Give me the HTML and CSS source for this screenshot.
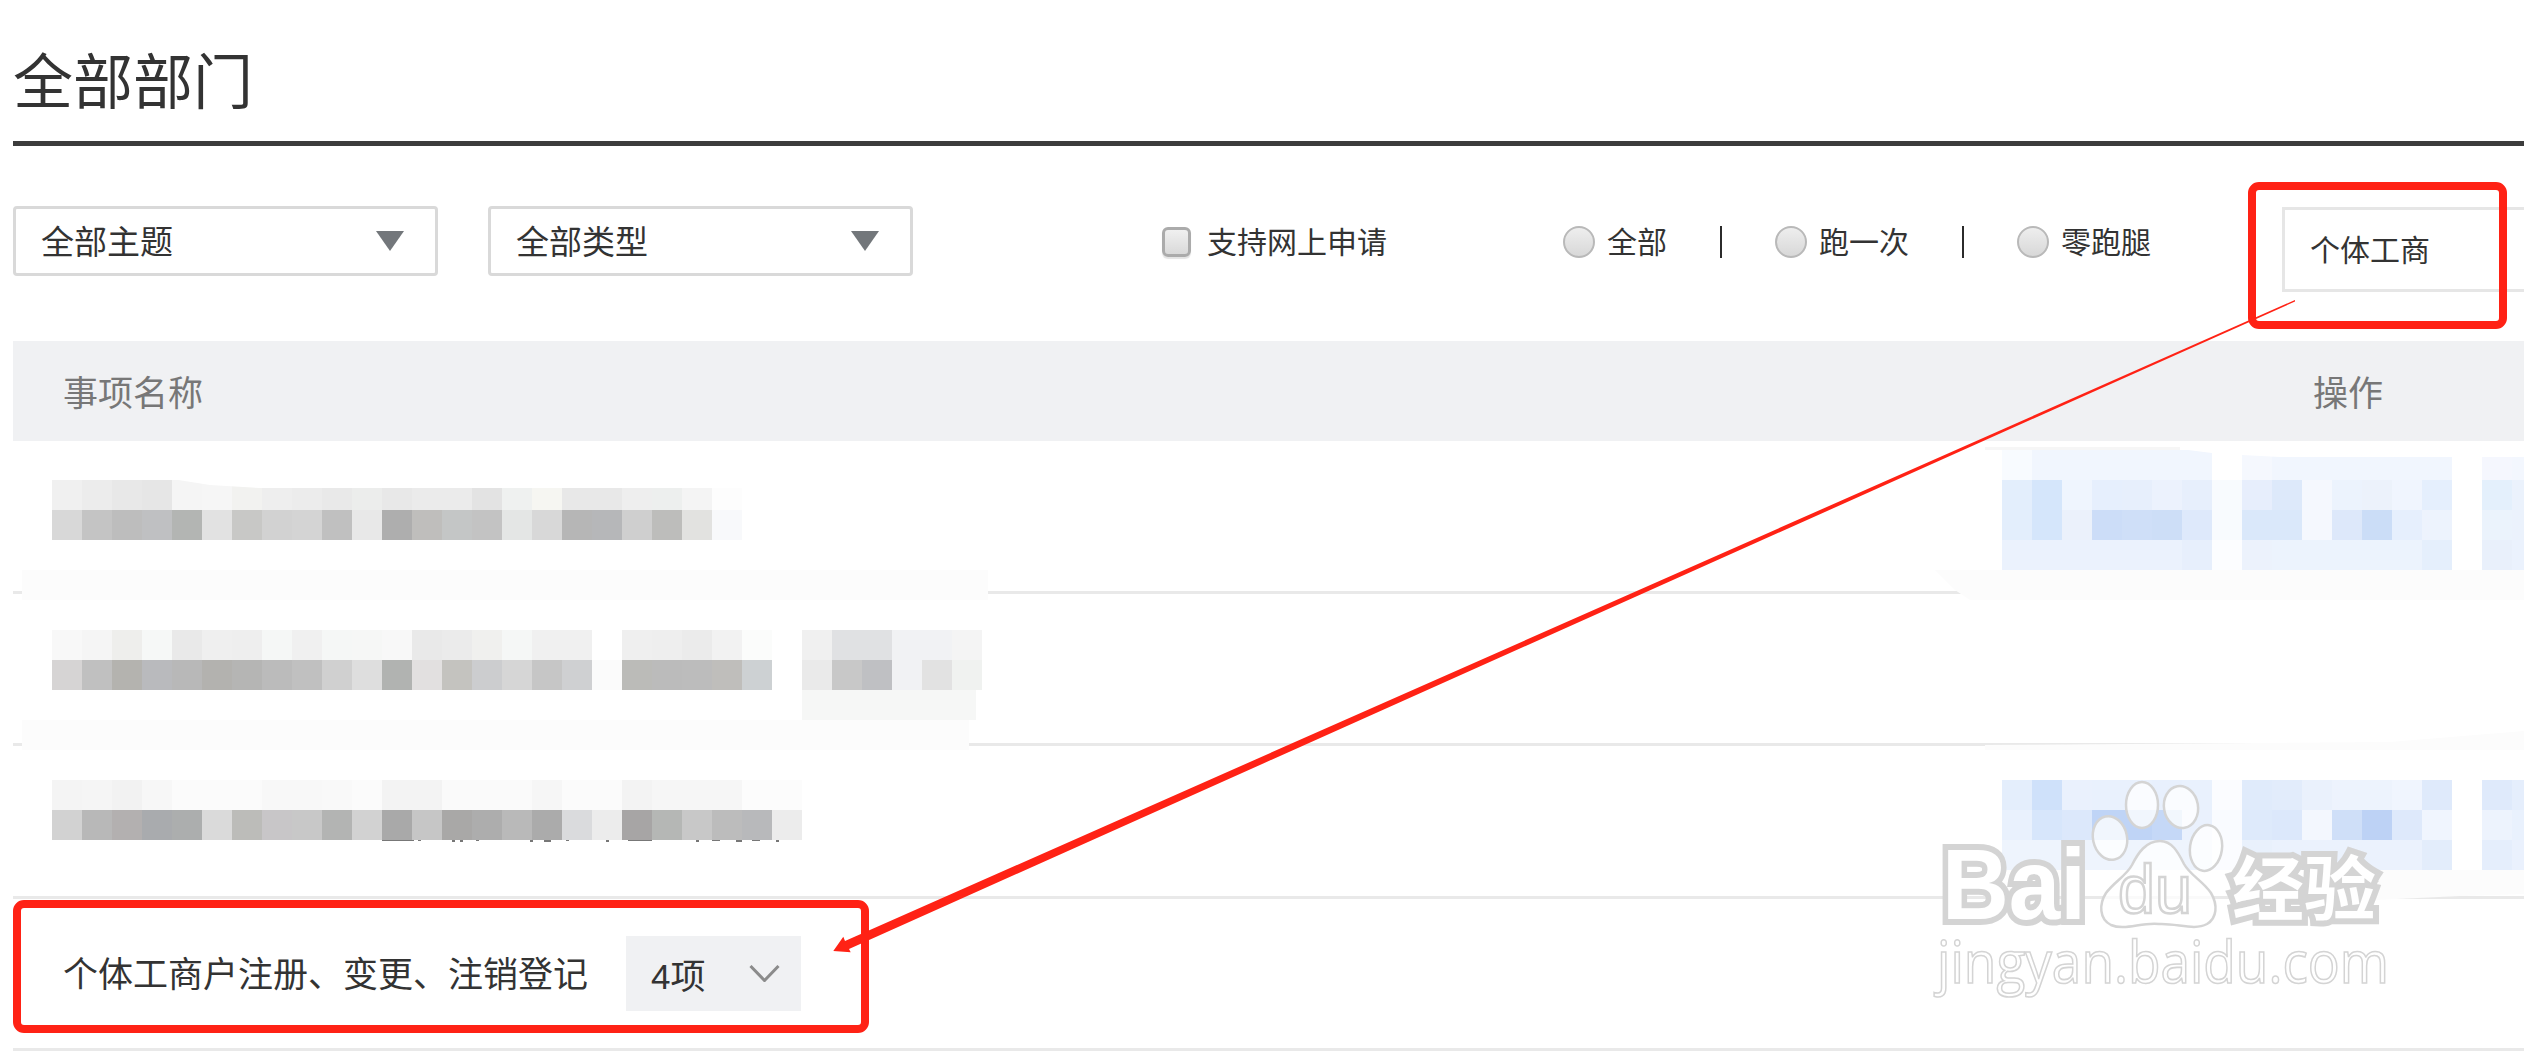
FILE: index.html
```html
<!DOCTYPE html>
<html lang="zh-CN">
<head>
<meta charset="utf-8">
<title>全部部门</title>
<link rel="stylesheet" href="styles.css">
</head>
<body>
<main class="page">
  <h1 class="title">全部部门</h1>
  <div class="filters">
    <div class="select"><span class="lift">全部主题</span><i class="caret"></i></div>
    <div class="select"><span class="lift">全部类型</span><i class="caret"></i></div>
    <label class="check"><i class="checkbox"></i><span class="lift">支持网上申请</span></label>
    <div class="radios">
      <label class="radio"><i class="dot"></i><span class="lift">全部</span></label>
      <i class="sep"></i>
      <label class="radio"><i class="dot"></i><span class="lift">跑一次</span></label>
      <i class="sep"></i>
      <label class="radio"><i class="dot"></i><span class="lift">零跑腿</span></label>
    </div>
    <div class="search">个体工商</div>
  </div>
  <div class="thead"><span>事项名称</span><span class="ops">操作</span></div>
  <div class="row"></div>
  <div class="row"></div>
  <div class="row"></div>
  <div class="row row-item">
    <span class="name lift">个体工商户注册、变更、注销登记</span>
    <span class="chip"><span>4项</span>
      <svg class="chev" viewBox="0 0 31 17"><polyline points="1.5,1 15.5,15.5 29.5,1"/></svg>
    </span>
  </div>
</main>

<svg class="overlay" viewBox="0 0 2524 1051" aria-hidden="true">
  <!-- redaction: soft bands -->
  <g class="band">
    <rect x="22" y="570" width="966" height="30"/>
    <rect x="22" y="720" width="947" height="30"/>
    <polygon points="1935,570 2524,570 2524,600 1970,600 1955,590"/>
    <polygon points="2524,731 2390,742 1985,745 1985,750 2524,750"/>
    <polygon points="2380,870 2524,870 2524,894 2460,896 2375,900"/>
  </g>
  <rect x="802" y="690" width="174" height="30" fill="#f6f7f6"/>
  <rect x="1985" y="447" width="195" height="3" fill="#f6f6f6"/>

  <!-- redaction: row 1 names -->
  <g class="m" transform="translate(52,480)">
    <rect x="0" fill="#f0f0f0"/><rect x="30" fill="#ececec"/><rect x="60" fill="#e8e8e8"/><rect x="90" fill="#e6e6e6"/><rect x="120" fill="#f5f5f5"/><rect x="150" fill="#f6f6f6"/><rect x="180" fill="#f2f2f0"/><rect x="210" fill="#eeeeee"/><rect x="240" fill="#ececec"/><rect x="270" fill="#e9e9e9"/><rect x="300" fill="#ecedec"/><rect x="330" fill="#e8e8e8"/><rect x="360" fill="#ebebeb"/><rect x="390" fill="#ebebeb"/><rect x="420" fill="#e3e3e3"/><rect x="450" fill="#eff1f0"/><rect x="480" fill="#f6f6f2"/><rect x="510" fill="#e8e8e8"/><rect x="540" fill="#e8e8e8"/><rect x="570" fill="#eeeeee"/><rect x="600" fill="#edefee"/><rect x="630" fill="#f4f4f4"/><rect x="660" fill="#fdfdfd"/>
  </g>
  <polygon points="172,479 210,485 260,488 743,488 743,479" fill="#fff"/>
  <g class="m" transform="translate(52,510)">
    <rect x="0" fill="#d8d8d8"/><rect x="30" fill="#c4c4c4"/><rect x="60" fill="#bdbdbd"/><rect x="90" fill="#bfc0c2"/><rect x="120" fill="#b3b5b3"/><rect x="150" fill="#e2e2e2"/><rect x="180" fill="#c8c8c6"/><rect x="210" fill="#d2d2d2"/><rect x="240" fill="#d4d4d4"/><rect x="270" fill="#c0c0c0"/><rect x="300" fill="#e8e8e8"/><rect x="330" fill="#aeaeae"/><rect x="360" fill="#bfbebc"/><rect x="390" fill="#c4c6c6"/><rect x="420" fill="#c3c3c3"/><rect x="450" fill="#e4e6e5"/><rect x="480" fill="#d8d8d8"/><rect x="510" fill="#b6b6b6"/><rect x="540" fill="#b6b7b9"/><rect x="570" fill="#cfcfcf"/><rect x="600" fill="#bdbdbb"/><rect x="630" fill="#e2e2e0"/><rect x="660" fill="#f8f9fb"/>
  </g>

  <!-- redaction: row 2 names -->
  <g class="m" transform="translate(52,630)">
    <rect x="0" fill="#f8f8f8"/><rect x="30" fill="#f5f5f5"/><rect x="60" fill="#eeeeec"/><rect x="90" fill="#f6f8f7"/><rect x="120" fill="#e9e9e9"/><rect x="150" fill="#efefef"/><rect x="180" fill="#eeeeee"/><rect x="210" fill="#f5f7f6"/><rect x="240" fill="#f0f0f0"/><rect x="270" fill="#f5f7f6"/><rect x="300" fill="#f6f7f6"/><rect x="330" fill="#f8f8f8"/><rect x="360" fill="#e9e9e9"/><rect x="390" fill="#ebebeb"/><rect x="420" fill="#f0f0ee"/><rect x="450" fill="#f5f7f6"/><rect x="480" fill="#f0f0f0"/><rect x="510" fill="#f0f0f0"/>
    <rect x="570" fill="#efefef"/><rect x="600" fill="#eeeeee"/><rect x="630" fill="#ebebeb"/><rect x="660" fill="#f2f2f2"/><rect x="690" fill="#fbfcfb"/>
    <rect x="750" fill="#f0f0f0"/><rect x="780" fill="#e0e1e3"/><rect x="810" fill="#e0e1e3"/><rect x="840" fill="#f1f2f4"/><rect x="870" fill="#f1f2f4"/><rect x="900" fill="#f4f4f4"/>
  </g>
  <g class="m" transform="translate(52,660)">
    <rect x="0" fill="#d6d4d4"/><rect x="30" fill="#c0c0c0"/><rect x="60" fill="#b4b3af"/><rect x="90" fill="#b9babd"/><rect x="120" fill="#b8b8b8"/><rect x="150" fill="#b3b2af"/><rect x="180" fill="#b5b5b4"/><rect x="210" fill="#bbbbbb"/><rect x="240" fill="#c0c0c0"/><rect x="270" fill="#d0d0d0"/><rect x="300" fill="#dedede"/><rect x="330" fill="#b1b3b1"/><rect x="360" fill="#e2e0e0"/><rect x="390" fill="#c4c3bf"/><rect x="420" fill="#cccdcf"/><rect x="450" fill="#d6d6d6"/><rect x="480" fill="#c6c6c6"/><rect x="510" fill="#cfd0d2"/><rect x="540" fill="#fbfbfb"/>
    <rect x="570" fill="#bbbbb8"/><rect x="600" fill="#bbbbbb"/><rect x="630" fill="#bcbcbc"/><rect x="660" fill="#bfbebb"/><rect x="690" fill="#cdd1d3"/>
    <rect x="750" fill="#eaeaea"/><rect x="780" fill="#c8c8c8"/><rect x="810" fill="#bfc0c3"/><rect x="840" fill="#f1f2f4"/><rect x="870" fill="#e2e2e2"/><rect x="900" fill="#f0f2f0"/>
  </g>

  <!-- redaction: row 3 names -->
  <g class="sliver">
    <rect x="382" y="839" width="32" height="2"/><rect x="418" y="839" width="3" height="2"/><rect x="452" y="839" width="3" height="3"/><rect x="460" y="839" width="3" height="3"/><rect x="476" y="839" width="3" height="2"/><rect x="530" y="839" width="3" height="3"/><rect x="544" y="839" width="7" height="3"/><rect x="566" y="839" width="3" height="2"/><rect x="606" y="839" width="3" height="3"/><rect x="628" y="839" width="24" height="2"/><rect x="696" y="839" width="3" height="3"/><rect x="712" y="839" width="8" height="2"/><rect x="736" y="839" width="6" height="3"/><rect x="752" y="839" width="8" height="2"/><rect x="776" y="839" width="3" height="3"/>
  </g>
  <g class="m" transform="translate(52,780)">
    <rect x="0" fill="#f4f4f4"/><rect x="30" fill="#f5f5f5"/><rect x="60" fill="#f2f2f2"/><rect x="90" fill="#f7f7f7"/><rect x="120" fill="#fbfbfb"/><rect x="150" fill="#fbfbfb"/><rect x="180" fill="#fbfbfb"/><rect x="210" fill="#f8f8f8"/><rect x="240" fill="#f8f8f8"/><rect x="270" fill="#f9f9f9"/><rect x="300" fill="#fbfbfb"/><rect x="330" fill="#f3f3f3"/><rect x="360" fill="#f3f3f3"/><rect x="390" fill="#fafafa"/><rect x="420" fill="#fafafa"/><rect x="450" fill="#fafafa"/><rect x="480" fill="#f6f6f6"/><rect x="510" fill="#fbfbfb"/><rect x="540" fill="#fbfbfb"/><rect x="570" fill="#f3f3f3"/><rect x="600" fill="#f6f6f6"/><rect x="630" fill="#f6f6f6"/><rect x="660" fill="#f6f6f6"/><rect x="690" fill="#fcfcfc"/><rect x="720" fill="#fcfcfc"/>
  </g>
  <g class="m" transform="translate(52,810)">
    <rect x="0" fill="#d2d2d2"/><rect x="30" fill="#b8b8b8"/><rect x="60" fill="#b3b0b0"/><rect x="90" fill="#a9abae"/><rect x="120" fill="#acaeae"/><rect x="150" fill="#dadada"/><rect x="180" fill="#bcbcb9"/><rect x="210" fill="#c8c6c8"/><rect x="240" fill="#c8c8c8"/><rect x="270" fill="#b3b4b3"/><rect x="300" fill="#d2d2d2"/><rect x="330" fill="#a9a9a9"/><rect x="360" fill="#c6c6c6"/><rect x="390" fill="#a9a8a7"/><rect x="420" fill="#adadad"/><rect x="450" fill="#b9b9b9"/><rect x="480" fill="#ababab"/><rect x="510" fill="#dadbdd"/><rect x="540" fill="#ececec"/><rect x="570" fill="#a7a5a5"/><rect x="600" fill="#b5b7b5"/><rect x="630" fill="#c8c8c8"/><rect x="660" fill="#bcbcbc"/><rect x="690" fill="#b8b9bb"/><rect x="720" fill="#ececec"/>
  </g>

  <!-- redaction: row 1 actions -->
  <g class="m" transform="translate(2002,450)">
    <rect x="0" fill="#f8fbff"/><rect x="30" fill="#f1f6fe"/><rect x="60" fill="#f1f6fe"/><rect x="90" fill="#f1f6fe"/><rect x="120" fill="#f1f6fe"/><rect x="150" fill="#f1f6fe"/><rect x="180" fill="#f1f6fe"/>
    <rect x="240" fill="#f5f8fe"/><rect x="270" fill="#f1f6fe"/><rect x="300" fill="#f1f6fe"/><rect x="330" fill="#f1f6fe"/><rect x="360" fill="#f1f6fe"/><rect x="390" fill="#f1f6fe"/><rect x="420" fill="#f1f6fe"/>
    <rect x="480" fill="#f5f7fe"/><rect x="510" fill="#f3f7fe"/>
  </g>
  <polygon points="2180,449 2212,453 2212,449" fill="#fff"/>
  <polygon points="2242,449 2242,455 2280,457 2524,457 2524,449" fill="#fff"/>
  <g class="m" transform="translate(2002,480)">
    <rect x="0" fill="#e3eefc"/><rect x="30" fill="#d5e6fb"/><rect x="60" fill="#eff5fe"/><rect x="90" fill="#e6effd"/><rect x="120" fill="#e7effc"/><rect x="150" fill="#ecf2fd"/><rect x="180" fill="#e7effc"/><rect x="210" fill="#f8fbfe"/>
    <rect x="240" fill="#e7eefc"/><rect x="270" fill="#dde9fa"/><rect x="300" fill="#f5f8fe"/><rect x="330" fill="#ecf3fd"/><rect x="360" fill="#ecf2fb"/><rect x="390" fill="#f0f5fe"/><rect x="420" fill="#e5effd"/>
    <rect x="480" fill="#e4f0fc"/><rect x="510" fill="#ebf2fc"/>
  </g>
  <g class="m" transform="translate(2002,510)">
    <rect x="0" fill="#e3eefc"/><rect x="30" fill="#d5e6fb"/><rect x="60" fill="#ebf1fb"/><rect x="90" fill="#ccddf8"/><rect x="120" fill="#cfdff8"/><rect x="150" fill="#cddef7"/><rect x="180" fill="#dee9fb"/><rect x="210" fill="#f8fbfe"/>
    <rect x="240" fill="#dae8fa"/><rect x="270" fill="#dae8fa"/><rect x="300" fill="#f5f8fe"/><rect x="330" fill="#dde8fa"/><rect x="360" fill="#cbddf7"/><rect x="390" fill="#e6effd"/><rect x="420" fill="#edf3fd"/>
    <rect x="480" fill="#ebf3fc"/><rect x="510" fill="#ebf2fc"/>
  </g>
  <g class="m" transform="translate(2002,540)">
    <rect x="0" fill="#ebf2fd"/><rect x="30" fill="#ebf2fd"/><rect x="60" fill="#ebf2fd"/><rect x="90" fill="#ebf2fd"/><rect x="120" fill="#ebf2fd"/><rect x="150" fill="#ebf2fd"/><rect x="180" fill="#e7effc"/><rect x="210" fill="#fcfdff"/>
    <rect x="240" fill="#ecf2fc"/><rect x="270" fill="#ecf3fd"/><rect x="300" fill="#ecf3fd"/><rect x="330" fill="#ecf3fd"/><rect x="360" fill="#ecf3fd"/><rect x="390" fill="#ecf3fd"/><rect x="420" fill="#e5effc"/>
    <rect x="480" fill="#e9f0fb"/><rect x="510" fill="#ebf2fd"/>
  </g>

  <!-- redaction: row 3 actions -->
  <g class="m" transform="translate(2002,780)">
    <rect x="0" fill="#e4eefc"/><rect x="30" fill="#cfe1fa"/><rect x="60" fill="#eaf1fd"/><rect x="90" fill="#e9f1fd"/><rect x="120" fill="#e9f1fd"/><rect x="150" fill="#e8f0fd"/><rect x="180" fill="#e9f1fd"/><rect x="210" fill="#fbfcff"/>
    <rect x="240" fill="#e0ebfb"/><rect x="270" fill="#e2ecfb"/><rect x="300" fill="#eaf1fc"/><rect x="330" fill="#edf3fd"/><rect x="360" fill="#edf3fd"/><rect x="390" fill="#f0f5fe"/><rect x="420" fill="#dfeafb"/>
    <rect x="480" fill="#dfeafb"/><rect x="510" fill="#e5eefc"/>
  </g>
  <g class="m" transform="translate(2002,810)">
    <rect x="0" fill="#e9f1fd"/><rect x="30" fill="#d7e6fb"/><rect x="60" fill="#dce8fb"/><rect x="90" fill="#bfd4f6"/><rect x="120" fill="#bfd4f6"/><rect x="150" fill="#c5d8f7"/><rect x="180" fill="#eaf1fd"/><rect x="210" fill="#f9fbff"/>
    <rect x="240" fill="#deeafb"/><rect x="270" fill="#dce8fb"/><rect x="300" fill="#f3f7fe"/><rect x="330" fill="#cfdff8"/><rect x="360" fill="#bdd2f5"/><rect x="390" fill="#dee9fb"/><rect x="420" fill="#f0f5fe"/>
    <rect x="480" fill="#edf3fd"/><rect x="510" fill="#e9f1fd"/>
  </g>
  <g class="m" transform="translate(2002,840)">
    <rect x="0" fill="#eef4fd"/><rect x="30" fill="#eef4fd"/><rect x="60" fill="#eef4fd"/><rect x="90" fill="#eef4fd"/><rect x="120" fill="#eef4fd"/><rect x="150" fill="#eef4fd"/><rect x="180" fill="#eef4fd"/><rect x="210" fill="#fbfcff"/>
    <rect x="240" fill="#e9f1fc"/><rect x="270" fill="#ebf2fd"/><rect x="300" fill="#ebf2fd"/><rect x="330" fill="#ebf2fd"/><rect x="360" fill="#ebf2fd"/><rect x="390" fill="#ebf2fd"/><rect x="420" fill="#e3edfb"/>
    <rect x="480" fill="#e5eefc"/><rect x="510" fill="#eaf1fd"/>
  </g>

  <!-- watermark -->
  <g class="wm">
    <ellipse cx="2142" cy="805" rx="16" ry="23"/>
    <ellipse cx="2181" cy="807" rx="17" ry="21" transform="rotate(-10 2181 807)"/>
    <ellipse cx="2110" cy="838" rx="17" ry="22" transform="rotate(-12 2110 838)"/>
    <ellipse cx="2206" cy="848" rx="16" ry="23" transform="rotate(8 2206 848)"/>
    <path d="M2160 841c-14 0-22 12-28 24-6 11-18 17-26 28-7 11-7 26 5 32 14 6 30-3 48-1 18-1 35 7 48 0 10-6 11-19 4-31-8-12-21-18-27-29-6-12-12-23-24-23z"/>
    <text class="wm-l" x="1942" y="919" textLength="144" lengthAdjust="spacingAndGlyphs">Bai</text>
    <text class="wm-d" x="2118" y="913" textLength="74" lengthAdjust="spacingAndGlyphs">du</text>
    <text class="wm-c" x="2232" y="915" textLength="144" lengthAdjust="spacingAndGlyphs">经验</text>
    <text class="wm-u" x="1937" y="983" textLength="452" lengthAdjust="spacingAndGlyphs">jingyan.baidu.com</text>
  </g>

  <!-- annotations -->
  <rect class="mark" x="2252" y="186" width="251" height="139" rx="7"/>
  <rect class="mark" x="17" y="904" width="848" height="125" rx="7"/>
  <polygon class="arrow" points="2295,300 845,941 843.3,936.7 833.3,951 850.7,952.3 849,949 2295,301.5"/>
</svg>
</body>
</html>
```

FILE: styles.css
```css
* { box-sizing: border-box; }
html, body { margin: 0; padding: 0; background: #fff; }
body {
  width: 2524px;
  height: 1051px;
  overflow: hidden;
  position: relative;
  color: #333;
  font-family: "Noto Sans CJK SC", "Liberation Sans", sans-serif;
  font-weight: 400;
}
i { display: block; font-style: normal; }

.page { padding-left: 13px; }
.lift { padding-bottom: 3px; }

.title {
  margin: 0;
  height: 146px;
  padding-top: 36px;
  border-bottom: 5px solid #3c3c3c;
  font-size: 60px;
  line-height: 84px;
  font-weight: 400;
}

.filters {
  display: flex;
  align-items: flex-start;
  height: 135px;
  margin-top: 60px;
  font-size: 30px;
  line-height: 32px;
  white-space: nowrap;
}
.select {
  flex: none;
  width: 425px;
  height: 70px;
  margin-right: 50px;
  padding: 0 31px 0 25px;
  display: flex;
  align-items: center;
  justify-content: space-between;
  border: 3px solid #d9d9d9;
  border-radius: 4px;
  font-size: 33px;
}
.caret {
  width: 0;
  height: 0;
  border-left: 14px solid transparent;
  border-right: 14px solid transparent;
  border-top: 20px solid #73777b;
}
.check {
  flex: none;
  display: flex;
  align-items: center;
  gap: 16px;
  margin: 18px 0 0 199px;
}
.checkbox {
  flex: none;
  width: 29px;
  height: 30px;
  border: 3px solid #ababab;
  border-radius: 6px;
  background: linear-gradient(#f0f0f0, #d9d9d9);
  box-shadow: 0 2px 1px #e4e4e4;
}
.radios {
  flex: none;
  display: flex;
  align-items: center;
  margin: 18px 0 0 176px;
}
.radio { flex: none; display: flex; align-items: center; gap: 12px; }
.dot {
  flex: none;
  width: 32px;
  height: 32px;
  border: 2px solid #b9b9b9;
  border-radius: 50%;
  background: linear-gradient(#eeeeee, #d8d8d8);
}
.sep {
  flex: none;
  width: 2px;
  height: 32px;
  margin: 0 53px 0 53px;
  background: #2b2b2b;
}
.search {
  flex: none;
  width: 300px;
  height: 85px;
  margin: 1px 0 0 131px;
  padding-left: 25px;
  border: 3px solid #e6e6e6;
  line-height: 77px;
}

.thead {
  display: flex;
  justify-content: space-between;
  height: 100px;
  padding: 0 141px 0 50px;
  background: #f0f1f3;
  color: #777;
  font-size: 35px;
  line-height: 100px;
}

.row {
  height: 152.5px;
  border-bottom: 3px solid #e9e9e9;
}
.row-item {
  display: flex;
  align-items: center;
  padding-left: 50px;
  font-size: 35px;
}
.name { flex: none; }
.chip {
  flex: none;
  width: 175px;
  height: 75px;
  margin-left: 38px;
  padding-left: 25px;
  display: flex;
  align-items: center;
  background: #f0f1f3;
  font-family: "Liberation Sans", "Noto Sans CJK SC", sans-serif;
}
.chev {
  width: 31px;
  height: 17px;
  margin-left: 44px;
  fill: none;
  stroke: #8b8b8b;
  stroke-width: 3;
}

.overlay {
  position: absolute;
  left: 0;
  top: 0;
  width: 2524px;
  height: 1051px;
  pointer-events: none;
}
.band { fill: #fcfcfc; }
.sliver { fill: #777; }
.m rect { width: 30px; height: 30px; y: 0; }

.wm {
  fill: rgba(255, 255, 255, .78);
  stroke: #d4d4d4;
  stroke-width: 2.5;
}
.wm-l, .wm-c {
  paint-order: stroke;
  fill: #fff;
  stroke-width: 12;
}
.wm-l { font: 700 100px "Liberation Sans", sans-serif; }
.wm-d { font: 400 68px "Liberation Sans", sans-serif; }
.wm-c { font: 700 70px "Noto Sans CJK SC", sans-serif; }
.wm-u { font: 400 58px "Open Sans", sans-serif; stroke-width: 1.6; }

.mark {
  fill: none;
  stroke: #ff2215;
  stroke-width: 8;
}
.arrow { fill: #ff2215; }
```
